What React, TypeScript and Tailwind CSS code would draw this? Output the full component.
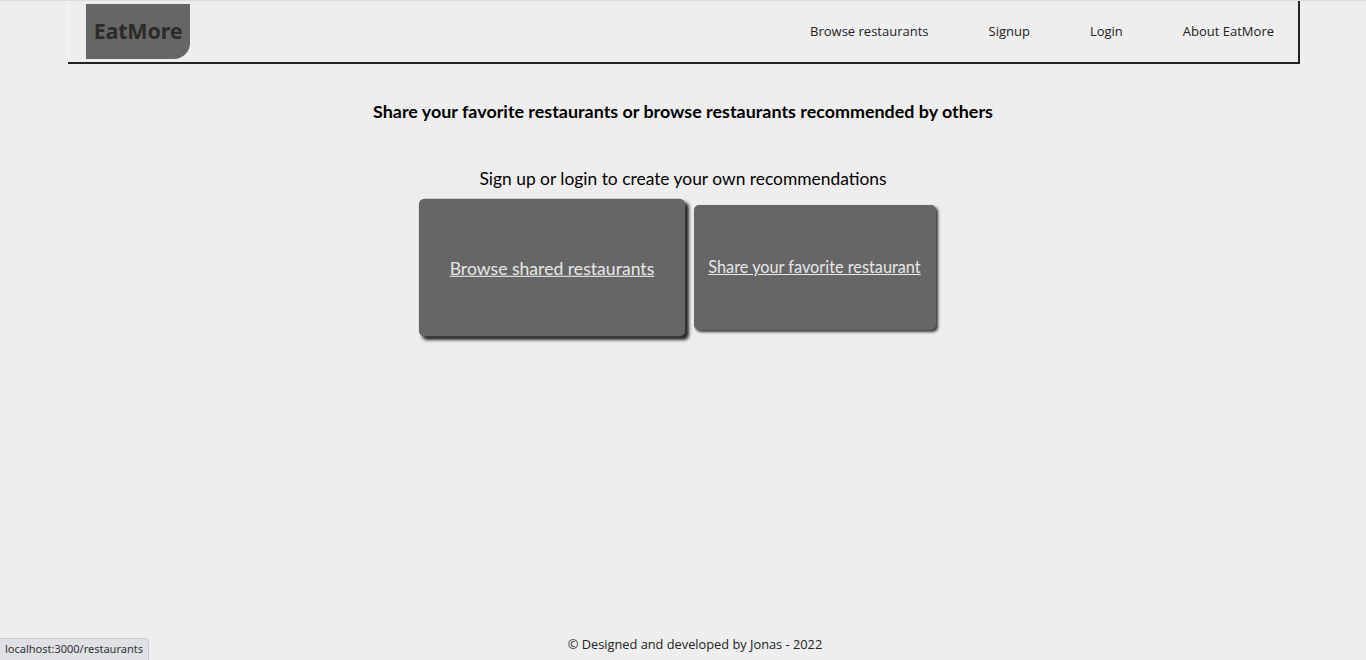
import React from "react";

export default function App() {
  const navFont = { fontFamily: '"Open Sans", "Noto Sans", sans-serif' };
  return (
    <div className="relative min-h-screen h-[660px] flex flex-col bg-[#eeeeee] border-t border-[#dcdcdc] overflow-hidden" style={navFont}>
      <header className="mx-[68px] h-[61px] flex items-stretch justify-between border-l border-[#f8f8f8] shadow-[1px_1px_0_1px_#222]">
        <div className="ml-[17px] mt-[3px] mb-[3px] w-[104px] bg-[#666666] rounded-br-[16px] flex items-center justify-center">
          <span className="text-[21.5px] font-bold text-[#2b2b2b] tracking-[-0.2px]" style={{ fontFamily: '"Noto Sans", sans-serif' }}>EatMore</span>
        </div>
        <nav className="flex items-center gap-[60px] pr-[24px] text-[13px] text-[#222]">
          <a>Browse restaurants</a>
          <a>Signup</a>
          <a>Login</a>
          <a>About EatMore</a>
        </nav>
      </header>

      <main className="flex flex-col items-center" style={{ fontFamily: '"Lato", "Noto Sans", sans-serif' }}>
        <h1 className="mt-[37px] text-[17.9px] font-bold text-black leading-[24px]">
          Share your favorite restaurants or browse restaurants recommended by others
        </h1>
        <p className="mt-[44px] text-[17.4px] text-black leading-[24px]">
          Sign up or login to create your own recommendations
        </p>
        <div className="mt-[14px] flex gap-[21px] items-start">
          <div className="w-[242px] h-[125px] bg-[#666666] rounded-[5px] flex items-center justify-center scale-110 shadow-[3px_3px_3px_#2a2a2a]">
            <a className="text-[16px] text-[#e8e8e8] underline">Browse shared restaurants</a>
          </div>
          <div className="w-[242px] h-[125px] bg-[#666666] rounded-[5px] flex items-center justify-center shadow-[2px_2px_3px_#333]">
            <a className="text-[16.3px] text-[#e8e8e8] underline">Share your favorite restaurant</a>
          </div>
        </div>
      </main>

      <footer className="mt-auto h-[30px] pl-[24px] flex items-center justify-center text-[12.8px] text-[#222]">
        © Designed and developed by Jonas - 2022
      </footer>

      <div className="absolute left-0 bottom-0 h-[22px] px-[5px] flex items-center bg-[#dfe1e5] border-t border-r border-[#c9ccd1] rounded-tr-[4px] text-[11px] text-[#333]" style={{ fontFamily: '"Noto Sans", sans-serif' }}>
        localhost:3000/restaurants
      </div>
    </div>
  );
}
